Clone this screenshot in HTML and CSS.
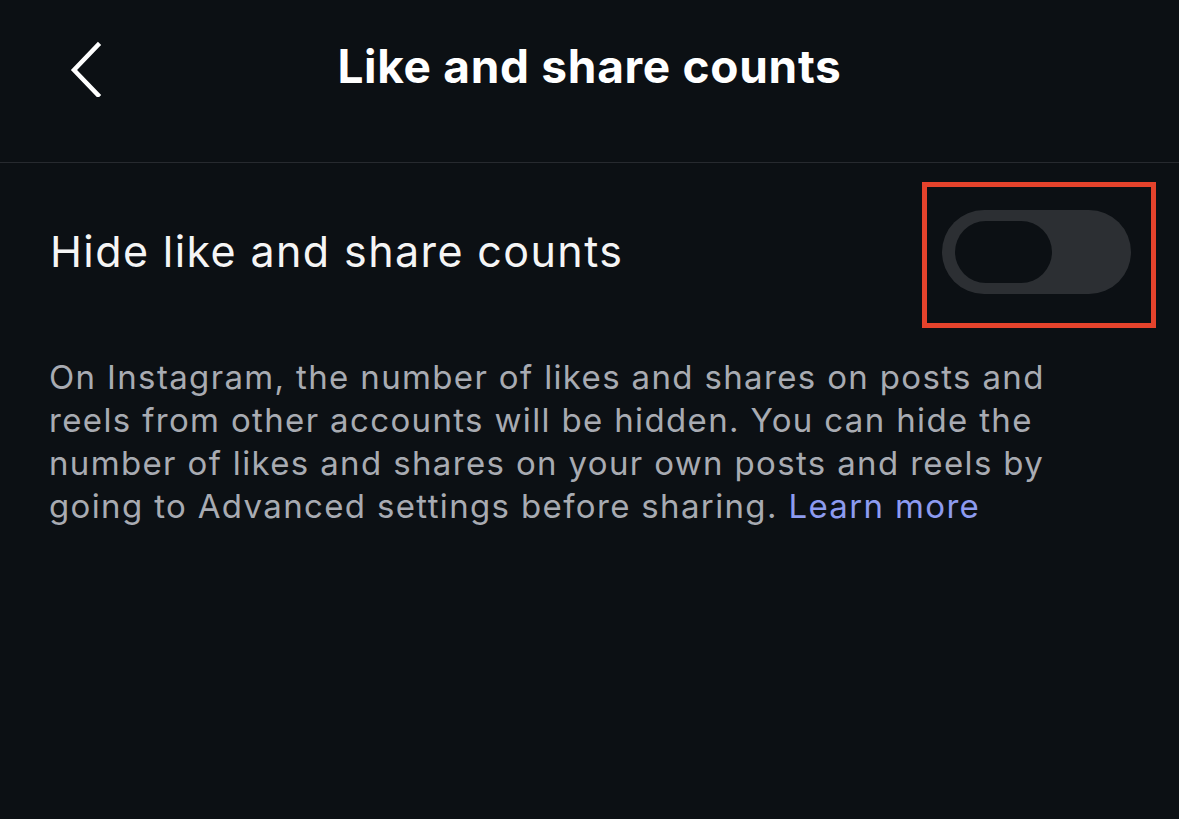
FILE: index.html
```html
<!DOCTYPE html>
<html lang="en">
<head>
<meta charset="utf-8">
<title>Like and share counts</title>
<link rel="stylesheet" href="styles.css">
</head>
<body>
<div class="screen">
  <header class="header">
    <button class="back" aria-label="Back">
      <svg width="40" height="60" viewBox="0 0 40 60"><polyline points="32,8 8,33 32,58" fill="none" stroke="#ffffff" stroke-width="4.5" stroke-linecap="square" stroke-linejoin="miter"/></svg>
    </button>
    <h1 class="title">Like and share counts</h1>
  </header>
  <section class="row">
    <span class="row-label">Hide like and share counts</span>
    <div class="highlight">
      <div class="switch"><div class="knob"></div></div>
    </div>
  </section>
  <p class="desc">On Instagram, the number of likes and shares on posts and reels from other accounts will be hidden. You can hide the number of likes and shares on your own posts and reels by going to Advanced settings before sharing. <a class="link" href="#">Learn more</a></p>
</div>
</body>
</html>
```
FILE: styles.css
```css
html, body {
  margin: 0;
  padding: 0;
  background: #0c1014;
}
.screen {
  width: 1179px;
  height: 819px;
  background: #0c1014;
  font-family: Inter, "Noto Sans", sans-serif;
  color: #f5f5f5;
  overflow: hidden;
}
.header {
  height: 162px;
  border-bottom: 1px solid #272a2f;
  display: flex;
  align-items: flex-start;
  justify-content: center;
  position: relative;
}
.back {
  position: absolute;
  left: 66px;
  top: 33px;
  background: none;
  border: 0;
  padding: 0;
  width: 40px;
  height: 70px;
}
.title {
  margin: 0;
  padding-top: 37px;
  font-size: 46px;
  line-height: 58px;
  font-weight: 700;
  letter-spacing: 0.7px;
  color: #ffffff;
}
.row {
  display: flex;
  align-items: center;
  justify-content: space-between;
  padding: 19px 23px 0 50px;
}
.row-label {
  font-size: 43px;
  font-weight: 400;
  letter-spacing: 1.4px;
  color: #f5f5f5;
  padding-bottom: 8px;
}
.highlight {
  border: 5px solid #e5432c;
  display: flex;
  align-items: flex-start;
  justify-content: flex-start;
  padding: 23px 0 0 15px;
  width: 209px;
  height: 113px;
}
.switch {
  width: 189px;
  height: 84px;
  border-radius: 42px;
  background: #2c2f33;
  display: flex;
  align-items: center;
  padding-left: 13px;
  box-sizing: border-box;
}
.knob {
  width: 97px;
  height: 62px;
  border-radius: 31px;
  background: #0c1014;
}
.desc {
  margin: 28px 99px 0 49px;
  font-size: 33px;
  line-height: 43px;
  color: #a8abb2;
  letter-spacing: 1.35px;
}
.link {
  color: #8d9bf0;
  text-decoration: none;
}
```
